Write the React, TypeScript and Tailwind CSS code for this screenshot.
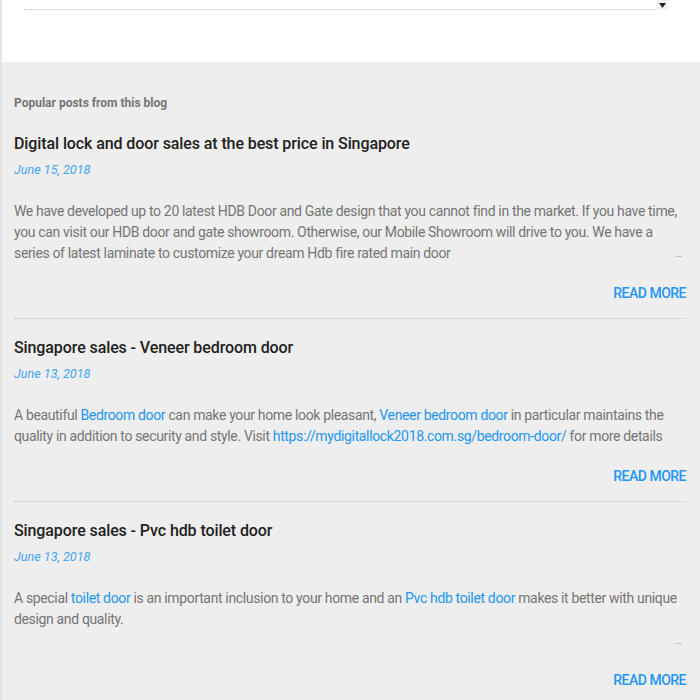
import type { ReactNode } from 'react';

type Post = {
  title: string;
  date: string;
  body: ReactNode;
  lines: 2 | 3;
  more: boolean;
};

const A = ({ children }: { children: ReactNode }) => (
  <a href="#" className="text-[#2196f3]">
    {children}
  </a>
);

const posts: Post[] = [
  {
    title: 'Digital lock and door sales at the best price in Singapore',
    date: 'June 15, 2018',
    lines: 3,
    more: true,
    body: (
      <>
        We have developed up to 20 latest HDB Door and Gate design that you cannot find in the market. If you have time,
        you can visit our HDB door and gate showroom. Otherwise, our Mobile Showroom will drive to you. We have a series
        of latest laminate to customize your dream Hdb fire rated main door
      </>
    ),
  },
  {
    title: 'Singapore sales - Veneer bedroom door',
    date: 'June 13, 2018',
    lines: 2,
    more: false,
    body: (
      <>
        A beautiful <A>Bedroom door</A> can make your home look pleasant, <A>Veneer bedroom door</A> in particular
        maintains the quality in addition to security and style. Visit{' '}
        <A>https://mydigitallock2018.com.sg/bedroom-door/</A> for more details
      </>
    ),
  },
  {
    title: 'Singapore sales - Pvc hdb toilet door',
    date: 'June 13, 2018',
    lines: 3,
    more: true,
    body: (
      <>
        A special <A>toilet door</A> is an important inclusion to your home and an <A>Pvc hdb toilet door</A> makes it
        better with unique design and quality.
      </>
    ),
  },
];

function PostItem({ post, last }: { post: Post; last: boolean }) {
  return (
    <article className={last ? 'pt-[18px]' : 'pt-[18px] pb-[14px] border-b border-dotted border-[#c4c4c4]'}>
      <h3 className="text-[16px] leading-[22px] font-medium tracking-[-0.1px] text-[#212121]">{post.title}</h3>
      <div className="mt-[4px] text-[12.6px] leading-[22px] italic text-[#42a5f5]">{post.date}</div>
      <div
        className={`relative mt-[20px] overflow-hidden text-[14px] leading-[21px] tracking-[-0.35px] text-[#757575] ${
          post.lines === 3 ? 'h-[63px]' : 'h-[42px]'
        }`}
      >
        <p>{post.body}</p>
        {post.more && (
          <span className="absolute right-[4px] bottom-0 pl-3 bg-[#eeeeee] text-[10px] leading-[21px] tracking-normal text-[#9e9e9e]">
            …
          </span>
        )}
      </div>
      <div className="mt-[18px] flex justify-end">
        <a href="#" className="text-[14px] leading-[22px] font-medium uppercase tracking-[-0.5px] text-[#2196f3]">
          Read more
        </a>
      </div>
    </article>
  );
}

export default function App() {
  return (
    <div
      className="min-h-[700px] bg-[#eeeeee] border-l-2 border-[#e4e4e4]"
      style={{ fontFamily: 'Roboto, "Liberation Sans", sans-serif' }}
    >
      <div className="h-[62px] bg-white">
        <div className="ml-[22px] mr-[32px] flex items-start">
          <div className="flex-1 mt-[9px] border-b border-dotted border-[#c0c0c0]" />
          <div className="w-[12px] h-[10px] bg-[#f2f2f2] flex items-center justify-center">
            <svg width="7" height="5" viewBox="0 0 7 5">
              <path d="M0 0H7L3.5 5Z" fill="#222" />
            </svg>
          </div>
        </div>
      </div>
      <section className="px-[12px] pr-[14px] pt-[32px] pb-[10px]">
        <h2 className="text-[12px] leading-[18px] font-bold text-[#757575]">Popular posts from this blog</h2>
        <div className="mt-[3px]">
          {posts.map((p, i) => (
            <PostItem key={i} post={p} last={i === posts.length - 1} />
          ))}
        </div>
      </section>
    </div>
  );
}
